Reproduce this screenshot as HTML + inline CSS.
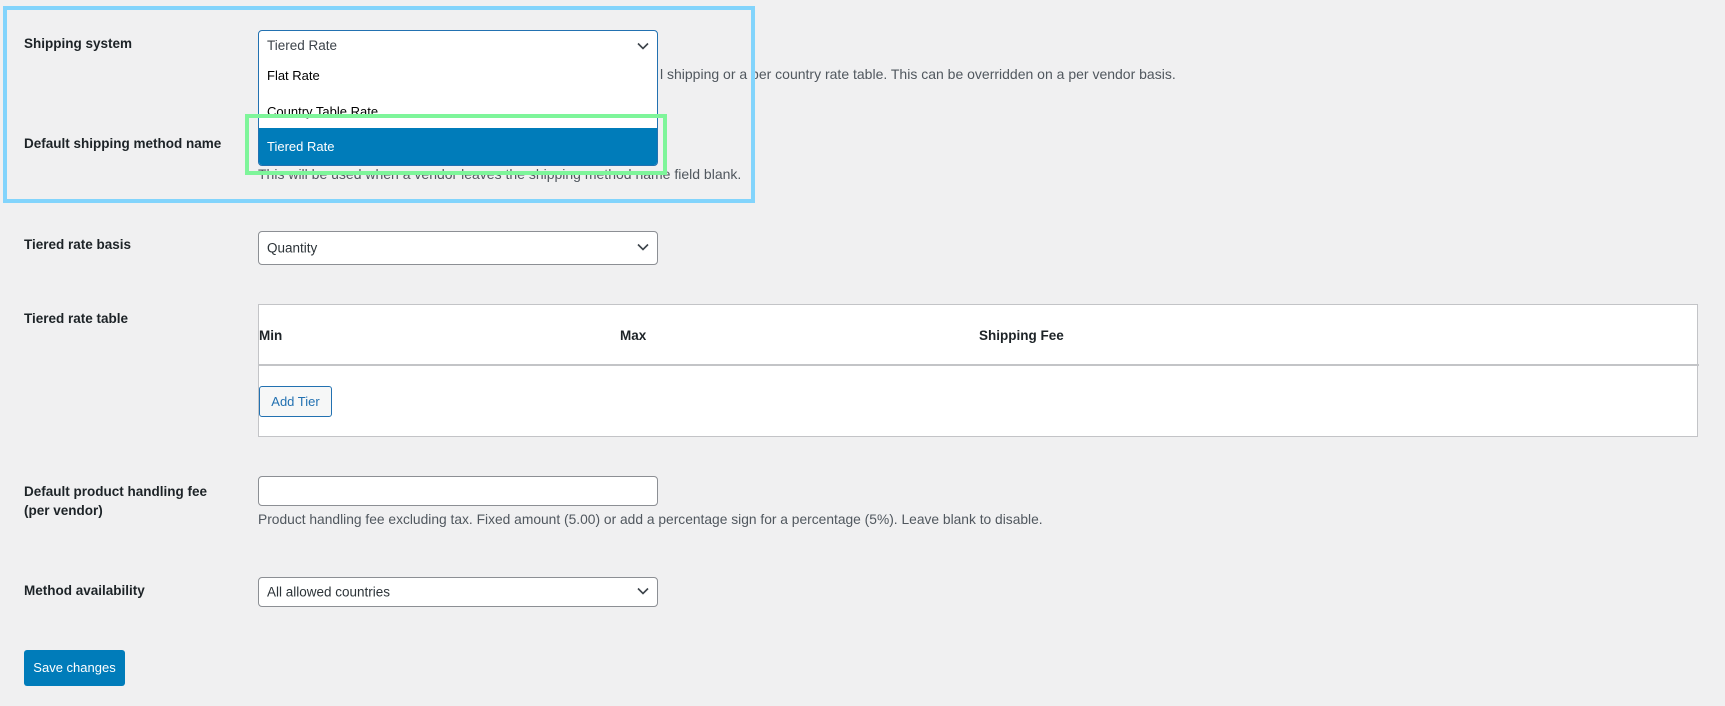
<!DOCTYPE html>
<html><head><style>
body{margin:0;width:1725px;height:706px;background:#f0f0f1;font-family:"Liberation Sans",sans-serif;font-size:14px;color:#1d2327;position:relative;overflow:hidden}
.a{position:absolute;white-space:nowrap}
.lbl{font-weight:bold;font-size:13.5px}
.desc{color:#50575e;font-size:13.8px}
.sel{position:absolute;background:#fff;border:1px solid #8c8f94;border-radius:4px;box-sizing:border-box;font-size:13.5px;color:#2c3338}
.sel span{position:absolute;left:8px;top:50%;transform:translateY(-50%)}
.sel svg{position:absolute;right:8px;top:50%;margin-top:-5px}
</style></head><body>
<div class="a desc" style="left:660px;top:66px;font-size:14px">l shipping or a per country rate table. This can be overridden on a per vendor basis.</div>
<div class="a desc" style="left:258px;top:166px;font-size:14px">This will be used when a vendor leaves the shipping method name field blank.</div>

<div class="a lbl" style="left:24px;top:36px">Shipping system</div>
<div class="a lbl" style="left:24px;top:136px">Default shipping method name</div>

<div style="position:absolute;left:258px;top:30px;width:400px;height:136px;background:#fff;border:1px solid #2271b1;border-radius:4px;box-sizing:border-box;overflow:hidden;font-size:13px">
 <div class="a" style="left:8px;top:7px;color:#3c434a;font-size:13.5px">Tiered Rate</div>
 <svg class="a" style="right:8px;top:11px" width="12" height="8" viewBox="0 0 12 8"><path d="M1 1.5l5 5 5-5" fill="none" stroke="#3c434a" stroke-width="1.6"/></svg>
 <div class="a" style="left:8px;top:37px;color:#000">Flat Rate</div>
 <div class="a" style="left:8px;top:73px;color:#000">Country Table Rate</div>
 <div class="a" style="left:0;top:97px;width:400px;height:39px;background:#007cba"></div>
 <div class="a" style="left:8px;top:108px;color:#fff">Tiered Rate</div>
</div>

<div class="a" style="left:3px;top:6px;width:744px;height:189px;border:4px solid #82d4fc"></div>
<div class="a" style="left:245px;top:114px;width:414px;height:53px;border:4px solid #7ef59a"></div>

<div class="a lbl" style="left:24px;top:237px">Tiered rate basis</div>
<div class="sel" style="left:258px;top:231px;width:400px;height:34px"><span>Quantity</span><svg width="12" height="8" viewBox="0 0 12 8"><path d="M1 1.5l5 5 5-5" fill="none" stroke="#3c434a" stroke-width="1.6"/></svg></div>

<div class="a lbl" style="left:24px;top:311px">Tiered rate table</div>
<div class="a" style="left:258px;top:304px;width:1440px;height:133px;background:#fff;border:1px solid #c3c4c7;box-sizing:border-box">
 <div class="a lbl" style="left:0;top:23px">Min</div>
 <div class="a lbl" style="left:361px;top:23px">Max</div>
 <div class="a lbl" style="left:720px;top:23px">Shipping Fee</div>
 <div class="a" style="left:0;top:59px;width:1440px;height:2px;background:#c3c4c7"></div>
 <div class="a" style="left:0;top:81px;width:73px;height:31px;border:1px solid #2271b1;border-radius:3px;background:#f6f7f7;box-sizing:border-box;color:#2271b1;font-size:13px;text-align:center;line-height:29px">Add Tier</div>
</div>

<div class="a lbl" style="left:24px;top:482px;line-height:19px">Default product handling fee<br>(per vendor)</div>
<div class="a" style="left:258px;top:476px;width:400px;height:30px;background:#fff;border:1px solid #8c8f94;border-radius:4px;box-sizing:border-box"></div>
<div class="a desc" style="left:258px;top:512px">Product handling fee excluding tax. Fixed amount (5.00) or add a percentage sign for a percentage (5%). Leave blank to disable.</div>

<div class="a lbl" style="left:24px;top:583px">Method availability</div>
<div class="sel" style="left:258px;top:577px;width:400px;height:30px"><span>All allowed countries</span><svg width="12" height="8" viewBox="0 0 12 8"><path d="M1 1.5l5 5 5-5" fill="none" stroke="#3c434a" stroke-width="1.6"/></svg></div>

<div class="a" style="left:24px;top:650px;width:101px;height:36px;background:#007cba;border-radius:3px;color:#fff;font-size:13px;text-align:center;line-height:36px">Save changes</div>
</body></html>
